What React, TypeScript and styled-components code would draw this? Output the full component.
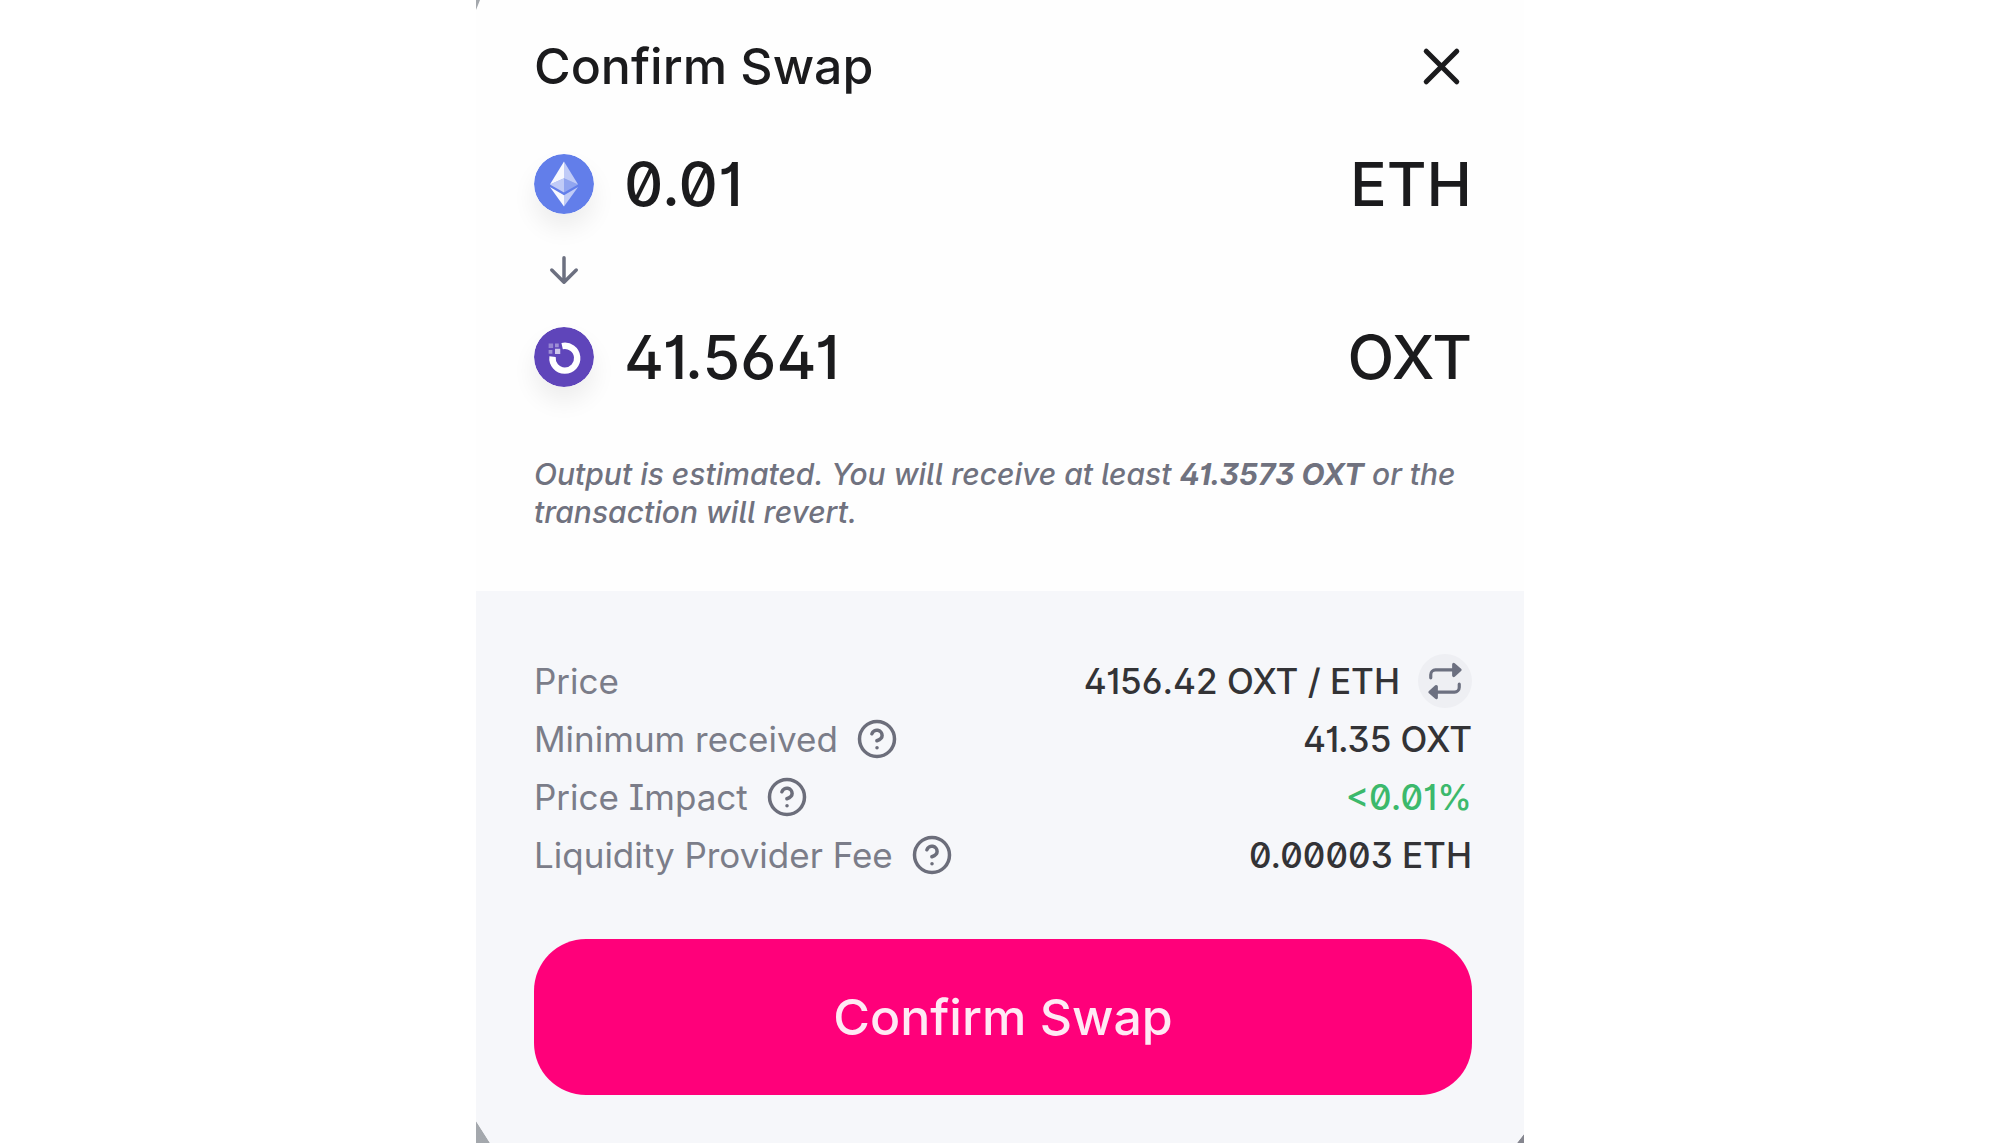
import React from 'react';
import styled, { createGlobalStyle } from 'styled-components';

const GlobalStyle = createGlobalStyle`
  * { box-sizing: border-box; }
  body {
    margin: 0;
    background: #ffffff;
    font-family: Inter, "Liberation Sans", sans-serif;
    font-feature-settings: 'ss01' on, 'ss02' on, 'cv01' on, 'cv03' on, 'zero' on;
    color: #1b1b1d;
  }
`;

const Page = styled.main`
  display: flex;
  justify-content: center;
  min-height: 100vh;
`;

const Backdrop = styled.div`
  display: flex;
  width: 100%;
  max-width: 1048px;
  background: linear-gradient(to right, #a4a8ad, #85868f);
`;

const Dialog = styled.section`
  display: flex;
  flex-direction: column;
  flex: 1;
  background: #fefefe;
  clip-path: polygon(
    0 10px, 4px 0, 100% 0,
    100% calc(100% - 9px), calc(100% - 7px) 100%,
    14px 100%, 0 calc(100% - 22px)
  );
`;

const Summary = styled.div`
  padding: 32px 52px 60px 58px;
`;

const Header = styled.header`
  display: flex;
  align-items: center;
  justify-content: space-between;
  margin-bottom: 48px;
`;

const Title = styled.h1`
  margin: 0;
  font-size: 50px;
  font-weight: 500;
  line-height: 68px;
`;

const CloseButton = styled.button`
  display: flex;
  padding: 0;
  border: 0;
  background: none;
  color: inherit;
  cursor: pointer;
`;

const TokenRow = styled.div`
  display: flex;
  align-items: center;
  justify-content: space-between;
  font-size: 61px;
  font-weight: 500;
  line-height: 72px;
`;

const TokenAmount = styled.div`
  display: flex;
  align-items: center;
  gap: 30px;
`;

const TokenLogo = styled.svg`
  width: 60px;
  height: 60px;
  border-radius: 50%;
  box-shadow: 0 14px 24px rgba(0, 0, 0, 0.07);
`;

const ArrowRow = styled.div`
  display: flex;
  justify-content: center;
  width: 60px;
  padding: 29px 0 30px;
  color: #6c7080;
`;

const Note = styled.p`
  margin: 62px 0 0;
  color: #70727f;
  font-size: 30px;
  font-style: italic;
  font-weight: 500;
  line-height: 38px;

  b { font-weight: 700; }
`;

const Details = styled.div`
  flex: 1;
  padding: 61px 52px 47px 58px;
  background: #f6f7fa;
`;

const DetailList = styled.dl`
  margin: 0 0 55px;
  font-size: 35px;
  line-height: 58px;
`;

const DetailRow = styled.div`
  display: flex;
  justify-content: space-between;
  height: 58px;
`;

const Term = styled.dt`
  display: flex;
  align-items: center;
  gap: 18px;
  color: #7b7d89;
`;

const Value = styled.dd<{ $positive?: boolean }>`
  display: flex;
  align-items: center;
  gap: 18px;
  margin: 0;
  color: ${(p) => (p.$positive ? '#3cb96c' : '#333336')};
  font-weight: 500;
`;

const HelpButton = styled(CloseButton)`
  color: #6c6e7b;
`;

const InvertButton = styled(CloseButton)`
  align-items: center;
  justify-content: center;
  width: 54px;
  height: 54px;
  border-radius: 50%;
  background: #eeeff3;
  color: #6c7080;
`;

const ConfirmButton = styled.button`
  width: 100%;
  padding: 44px 0;
  border: 0;
  border-radius: 52px;
  background: #ff007a;
  color: #ffe9f4;
  font-family: inherit;
  font-feature-settings: inherit;
  font-size: 50px;
  font-weight: 500;
  line-height: 68px;
  cursor: pointer;
`;

const Glyph = ({ size, children }: { size: number; children: React.ReactNode }) => (
  <svg width={size} height={size} viewBox="0 0 24 24" fill="none" stroke="currentColor"
    strokeWidth="2" strokeLinecap="round" strokeLinejoin="round" aria-hidden="true">
    {children}
  </svg>
);

const EthLogo = () => (
  <TokenLogo viewBox="0 0 32 32" aria-hidden="true">
    <circle cx="16" cy="16" r="16" fill="#627eea" />
    <g fill="#fff">
      <path fillOpacity=".6" d="M16 4v8.87l7.5 3.35z" />
      <path fillOpacity=".95" d="M16 4L8.5 16.22l7.5-3.35z" />
      <path fillOpacity=".6" d="M16 21.97v6.03l7.5-10.38z" />
      <path fillOpacity=".95" d="M16 28v-6.03l-7.5-4.35z" />
      <path fillOpacity=".3" d="M16 20.57l7.5-4.35-7.5-3.35z" />
      <path fillOpacity=".6" d="M8.5 16.22l7.5 4.35v-7.7z" />
    </g>
  </TokenLogo>
);

const OxtLogo = () => (
  <TokenLogo viewBox="0 0 32 32" aria-hidden="true">
    <circle cx="16" cy="16" r="16" fill="#5f45ba" />
    <path d="M15 10.2A6.6 6.6 0 1 1 9.9 15.8" fill="none" stroke="#fff" strokeWidth="3.4" />
    <path d="M11.2 11.6h2.8v2.8h-2.8z" fill="#fff" fillOpacity=".7" />
    <path d="M7.8 8.8h2.4v2.4H7.8z" fill="#fff" fillOpacity=".35" />
    <path d="M11.2 8.8h2v2h-2zM7.8 12.2h2v2h-2z" fill="#fff" fillOpacity=".4" />
  </TokenLogo>
);

const Help = ({ topic }: { topic: string }) => (
  <HelpButton type="button" aria-label={`About ${topic}`}>
    <Glyph size={42}>
      <circle cx="12" cy="12" r="10" />
      <path d="M9.09 9a3 3 0 0 1 5.83 1c0 2-3 3-3 3" />
      <path d="M12 17h.01" />
    </Glyph>
  </HelpButton>
);

const details = [
  { term: 'Price', value: '4156.42 OXT / ETH', invert: true },
  { term: 'Minimum received', value: '41.35 OXT', help: true },
  { term: 'Price Impact', value: '<0.01%', help: true, positive: true },
  { term: 'Liquidity Provider Fee', value: '0.00003 ETH', help: true },
];

export default function App() {
  return (
    <Page>
      <GlobalStyle />
      <Backdrop>
        <Dialog role="dialog" aria-labelledby="swap-title">
          <Summary>
            <Header>
              <Title id="swap-title">Confirm Swap</Title>
              <CloseButton type="button" aria-label="Close">
                <Glyph size={61}><path d="M18 6L6 18M6 6l12 12" /></Glyph>
              </CloseButton>
            </Header>
            <TokenRow>
              <TokenAmount><EthLogo /><span>0.01</span></TokenAmount>
              <span>ETH</span>
            </TokenRow>
            <ArrowRow>
              <Glyph size={42}><path d="M12 5v14M19 12l-7 7-7-7" /></Glyph>
            </ArrowRow>
            <TokenRow>
              <TokenAmount><OxtLogo /><span>41.5641</span></TokenAmount>
              <span>OXT</span>
            </TokenRow>
            <Note>
              Output is estimated. You will receive at least <b>41.3573 OXT</b> or the transaction will revert.
            </Note>
          </Summary>
          <Details>
            <DetailList>
              {details.map((d) => (
                <DetailRow key={d.term}>
                  <Term>{d.term}{d.help && <Help topic={d.term} />}</Term>
                  <Value $positive={d.positive}>
                    {d.value}
                    {d.invert && (
                      <InvertButton type="button" aria-label="Invert price">
                        <Glyph size={38}>
                          <path d="M3 10V8a3 3 0 0 1 3-3h12M21 14v2a3 3 0 0 1-3 3H6" />
                          <path d="M17.5 1.5L21.5 5l-4 3.5zM6.5 15.5l-4 3.5 4 3.5z" fill="currentColor" />
                        </Glyph>
                      </InvertButton>
                    )}
                  </Value>
                </DetailRow>
              ))}
            </DetailList>
            <ConfirmButton type="button">Confirm Swap</ConfirmButton>
          </Details>
        </Dialog>
      </Backdrop>
    </Page>
  );
}
